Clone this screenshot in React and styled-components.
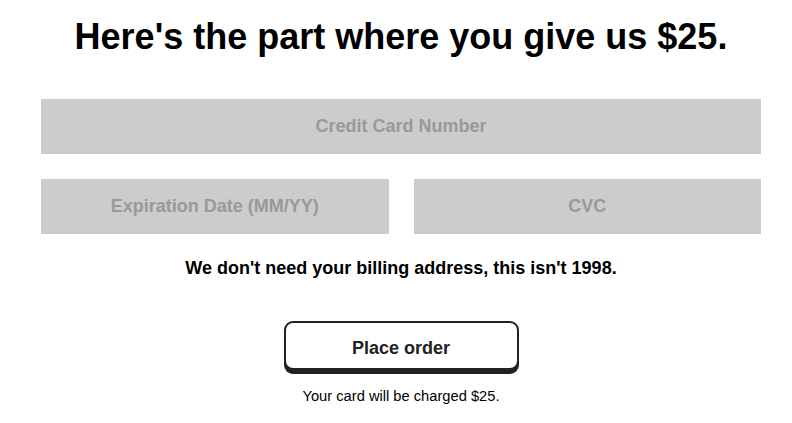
import React from "react";
import styled, { createGlobalStyle } from "styled-components";

const GlobalStyle = createGlobalStyle`
  body {
    margin: 0;
    background: #ffffff;
    font-family: "Liberation Sans", Arial, sans-serif;
    color: #000000;
  }
`;

const Page = styled.div`
  padding: 0 31px 0 41px;
`;

const Form = styled.form`
  display: flex;
  flex-direction: column;
  align-items: center;
  width: 720px;
`;

const Title = styled.h1`
  font-size: 36px;
  font-weight: bold;
  line-height: 40px;
  margin: 17px 0 0;
  text-align: center;
`;

const Fields = styled.div`
  display: grid;
  grid-template-columns: 1fr 1fr;
  column-gap: 25px;
  row-gap: 25px;
  width: 100%;
  margin-top: 42px;
`;

const Input = styled.input`
  grid-column: ${(props) => (props.wide ? "1 / span 2" : "auto")};
  height: 55px;
  box-sizing: border-box;
  border: none;
  background-color: #cccccc;
  font-family: "Liberation Sans", Arial, sans-serif;
  font-size: 18px;
  font-weight: bold;
  text-align: center;
  color: #333333;
  outline: none;
  &::placeholder {
    color: #999999;
  }
`;

const Note = styled.p`
  font-size: 18px;
  font-weight: bold;
  margin: 23px 0 0;
  line-height: 22px;
`;

const Button = styled.button`
  margin-top: 42px;
  width: 235px;
  height: 49px;
  box-sizing: border-box;
  padding: 6px 0 0;
  background: #ffffff;
  border: 2px solid #222222;
  border-radius: 9px;
  box-shadow: 0 4px 0 #222222;
  font-family: "Liberation Sans", Arial, sans-serif;
  font-size: 18px;
  font-weight: bold;
  color: #222222;
  cursor: pointer;
`;

const Fine = styled.p`
  font-size: 14.7px;
  margin: 17px 0 0;
  line-height: 18px;
`;

export default function App() {
  return (
    <Page>
      <GlobalStyle />
      <Form onSubmit={(e) => e.preventDefault()}>
        <Title>Here's the part where you give us $25.</Title>
        <Fields>
          <Input wide placeholder="Credit Card Number" />
          <Input placeholder="Expiration Date (MM/YY)" />
          <Input placeholder="CVC" />
        </Fields>
        <Note>We don't need your billing address, this isn't 1998.</Note>
        <Button type="submit">Place order</Button>
        <Fine>Your card will be charged $25.</Fine>
      </Form>
    </Page>
  );
}
